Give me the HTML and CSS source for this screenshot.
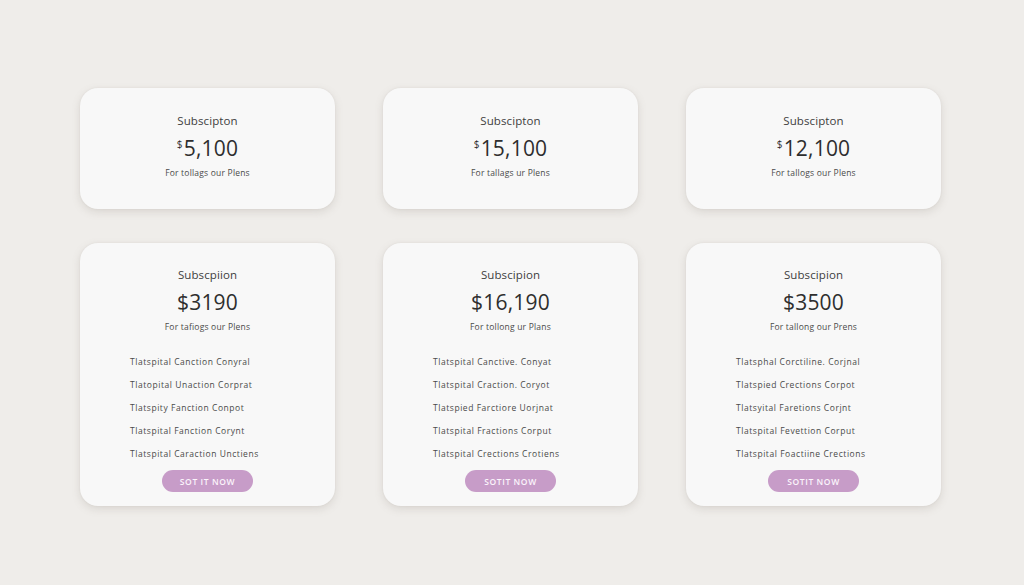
FILE: index.html
```html
<!DOCTYPE html>
<html>
<head>
<meta charset="utf-8">
<link rel="stylesheet" href="styles.css">
</head>
<body>
<main class="grid">
  <section class="card">
    <div class="title">Subscipton</div>
    <div class="price"><sup>$</sup>5,100</div>
    <div class="sub">For tollags our Plens</div>
  </section>
  <section class="card">
    <div class="title">Subscipton</div>
    <div class="price"><sup>$</sup>15,100</div>
    <div class="sub">For tallags ur Plens</div>
  </section>
  <section class="card">
    <div class="title">Subscipton</div>
    <div class="price"><sup>$</sup>12,100</div>
    <div class="sub">For tallogs our Plens</div>
  </section>

  <section class="card big">
    <div class="title">Subscpiion</div>
    <div class="price">$3190</div>
    <div class="sub">For tafiogs our Plens</div>
    <ul class="features">
      <li>Tlatspital Canction Conyral</li>
      <li>Tlatopital Unaction Corprat</li>
      <li>Tlatspity Fanction Conpot</li>
      <li>Tlatspital Fanction Corynt</li>
      <li>Tlatspital Caraction Unctiens</li>
    </ul>
    <button class="btn">SOT IT NOW</button>
  </section>
  <section class="card big">
    <div class="title">Subscipion</div>
    <div class="price">$16,190</div>
    <div class="sub">For tollong ur Plans</div>
    <ul class="features">
      <li>Tlatspital Canctive. Conyat</li>
      <li>Tlatspital Craction. Coryot</li>
      <li>Tlatspied Farctiore Uorjnat</li>
      <li>Tlatspital Fractions Corput</li>
      <li>Tlatspital Crections Crotiens</li>
    </ul>
    <button class="btn">SOTIT NOW</button>
  </section>
  <section class="card big">
    <div class="title">Subscipion</div>
    <div class="price">$3500</div>
    <div class="sub">For tallong our Prens</div>
    <ul class="features">
      <li>Tlatsphal Corctiline. Corjnal</li>
      <li>Tlatspied Crections Corpot</li>
      <li>Tlatsyital Faretions Corjnt</li>
      <li>Tlatspital Fevettion Corput</li>
      <li>Tlatspital Foactiine Crections</li>
    </ul>
    <button class="btn">SOTIT NOW</button>
  </section>
</main>
</body>
</html>
```
FILE: styles.css
```css
* { box-sizing: border-box; }
html, body { margin: 0; padding: 0; }
body {
  width: 1024px;
  height: 585px;
  background: #efedea;
  font-family: "Open Sans", "Liberation Sans", sans-serif;
  overflow: hidden;
}
.grid {
  display: grid;
  grid-template-columns: repeat(3, 255px);
  grid-template-rows: 121px 263px;
  column-gap: 48px;
  row-gap: 34px;
  padding: 88px 0 0 80px;
}
.card {
  background: #f8f8f8;
  border-radius: 18px;
  box-shadow: 0 3px 8px rgba(120, 110, 100, 0.18), 0 0 2px rgba(120, 110, 100, 0.10);
  display: flex;
  flex-direction: column;
  align-items: center;
  padding-top: 25px;
}
.card.big { padding-top: 24px; }
.title {
  font-size: 11.5px;
  line-height: 16px;
  color: #3e3e3e;
  letter-spacing: 0.1px;
}
.price {
  margin-top: 6px;
  font-size: 21px;
  line-height: 26px;
  color: #2e2e2e;
  letter-spacing: 0.2px;
}
.price sup {
  font-size: 10px;
  vertical-align: top;
  position: relative;
  top: -4px;
  margin-right: 1px;
}
.sub {
  margin-top: 6px;
  font-size: 8.5px;
  line-height: 12px;
  color: #4a4a4a;
  letter-spacing: 0.2px;
}
.features {
  list-style: none;
  margin: 17px 0 0 0;
  padding: 0 0 0 50px;
  align-self: stretch;
}
.features li {
  font-size: 8.5px;
  line-height: 23px;
  color: #4a4a4a;
  letter-spacing: 0.55px;
}
.btn {
  margin-top: 5px;
  width: 91px;
  height: 22px;
  border: none;
  border-radius: 11px;
  background: #c79cc8;
  color: #fbf4fb;
  font-family: "Open Sans", "Liberation Sans", sans-serif;
  font-size: 8.5px;
  font-weight: 600;
  letter-spacing: 0.6px;
  padding: 0;
}
```
